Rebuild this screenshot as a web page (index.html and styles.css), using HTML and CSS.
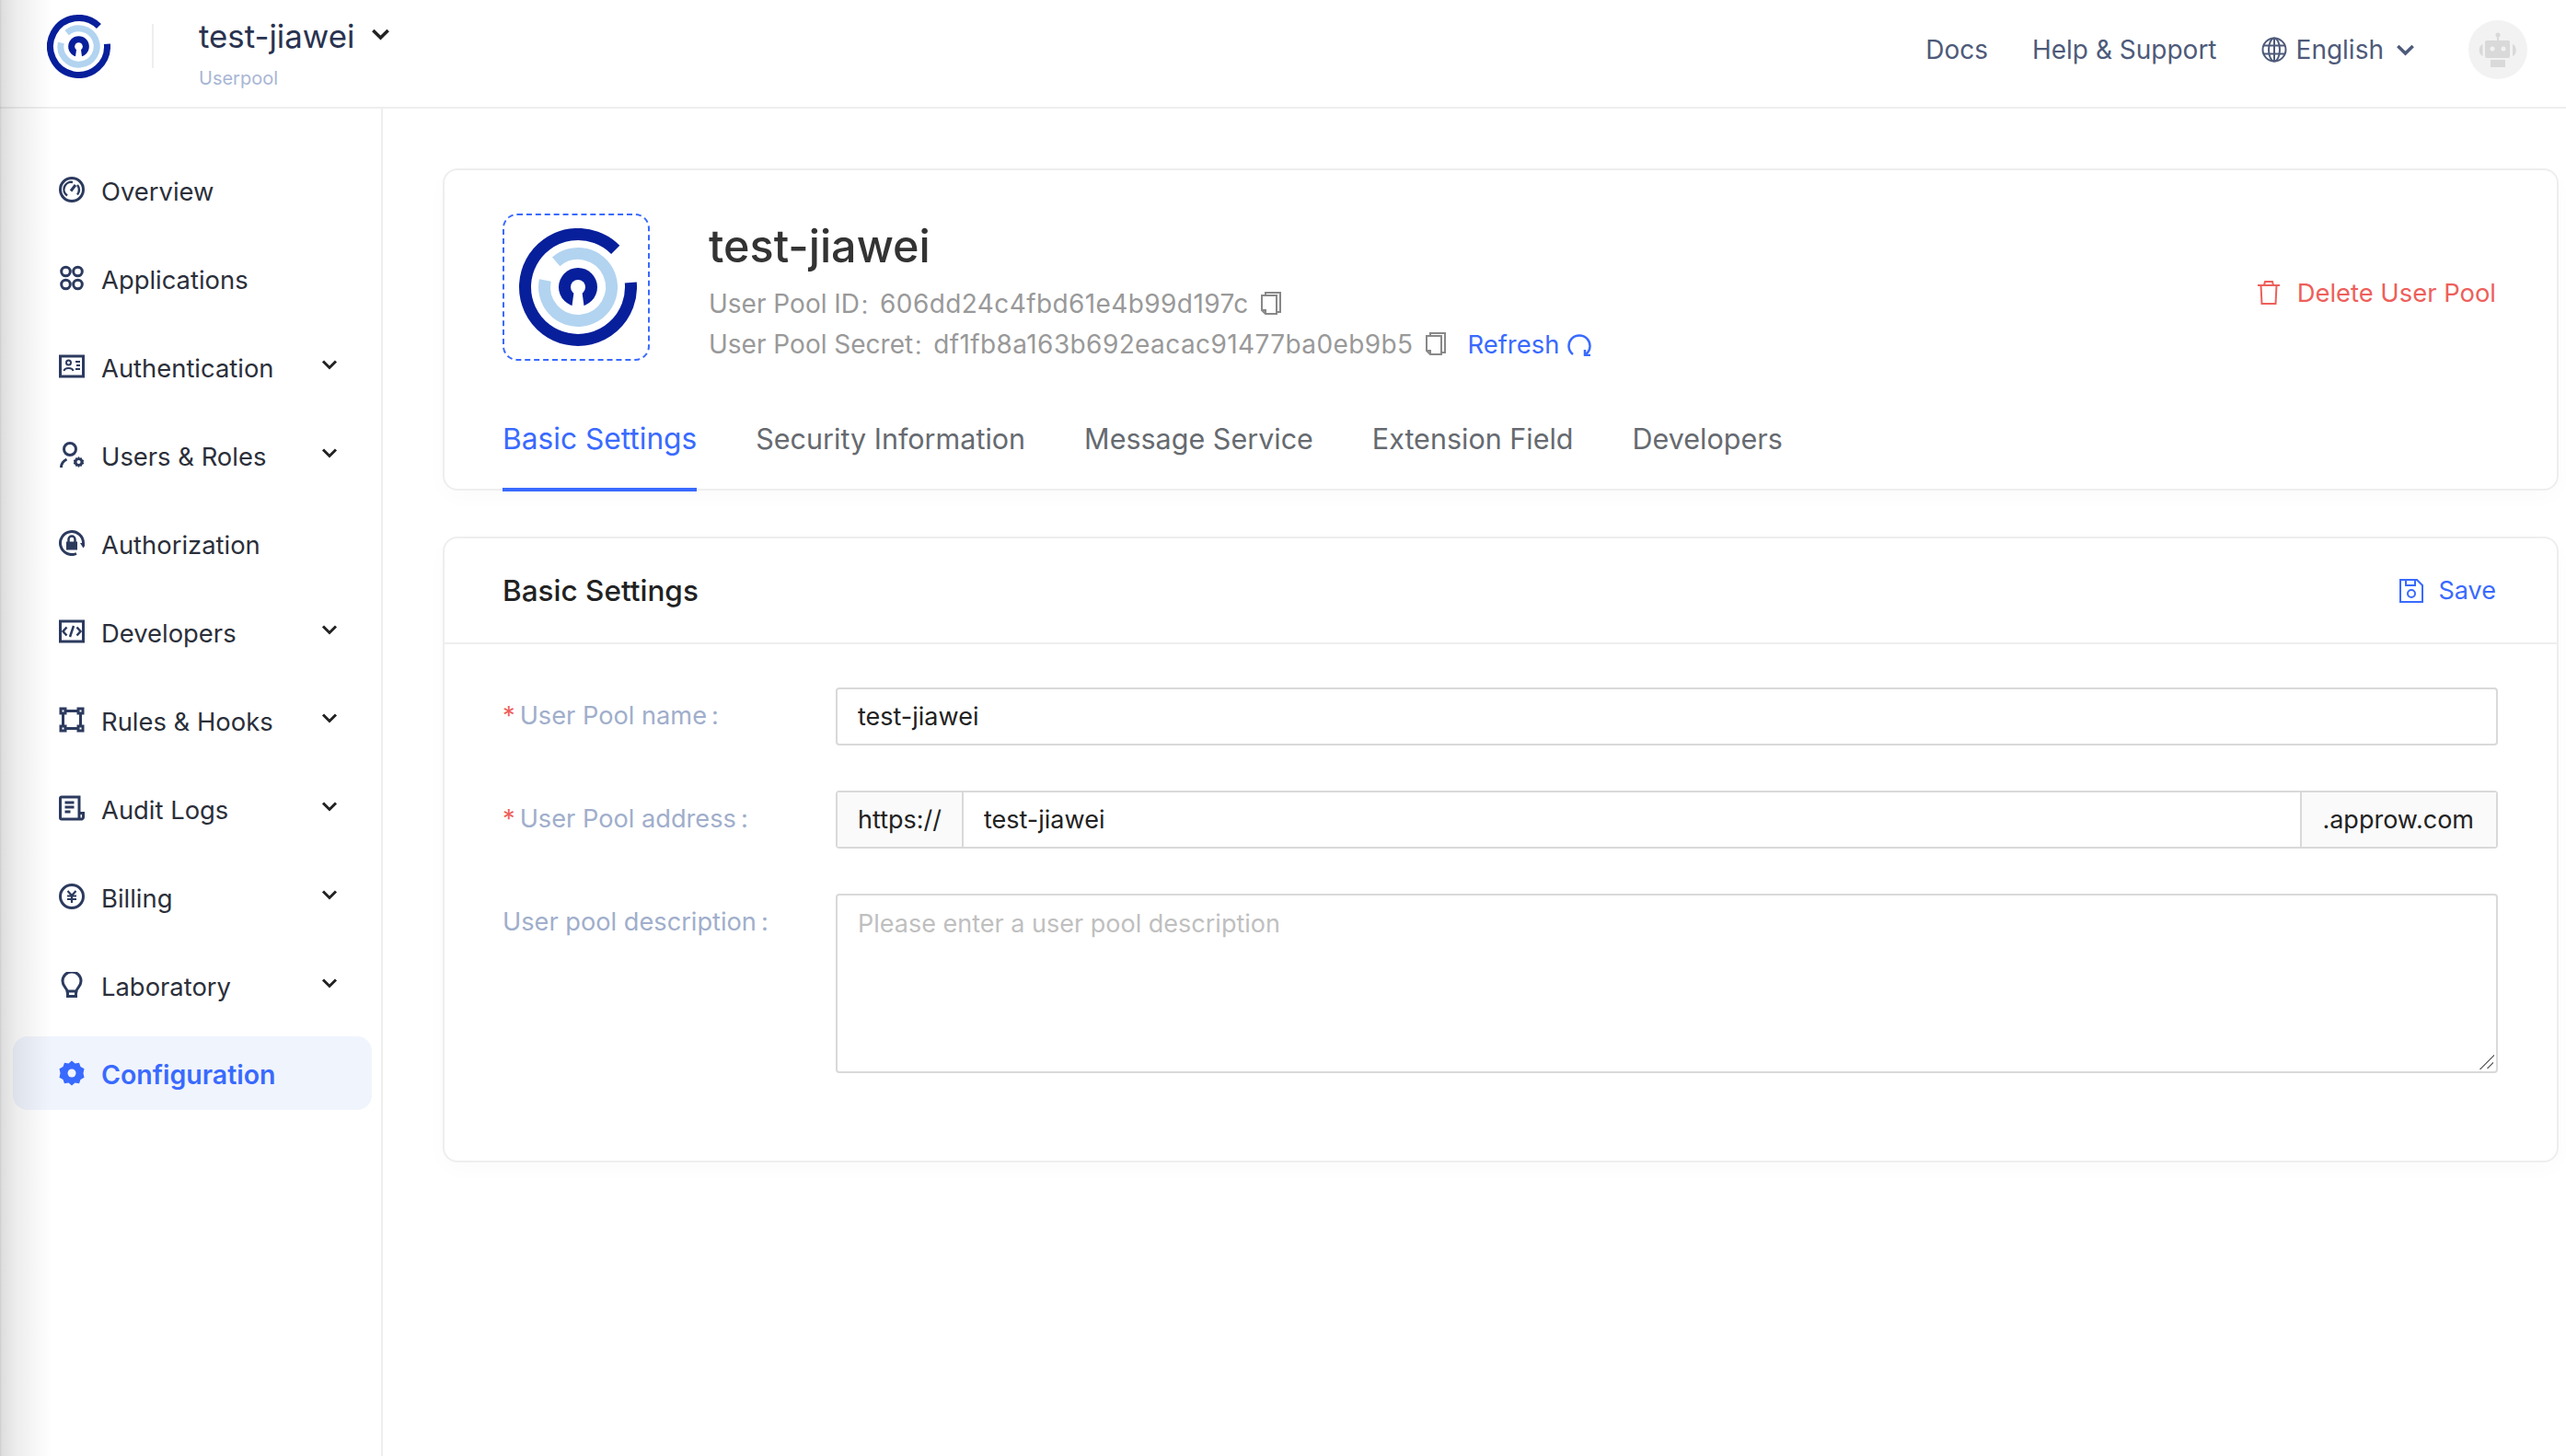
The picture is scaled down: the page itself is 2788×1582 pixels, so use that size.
FILE: index.html
```html
<!DOCTYPE html>
<html lang="en">
<head>
    <meta charset="UTF-8">
    <meta name="viewport" content="width=device-width, initial-scale=1.0">
    <title>Basic Settings</title>
    <link rel="stylesheet" href="styles.css">
</head>
<body>
    <svg class="defs" width="0" height="0">
        <symbol id="logo" viewBox="0 0 128 128">
            <path d="M104.7 23.3A57.5 57.5 0 1 0 121.3 59" fill="none" stroke="#071f9b" stroke-width="13"/>
            <path d="M40.2 36.3A36.5 36.5 0 1 1 28.3 56.5" fill="none" stroke="#b2d4f0" stroke-width="13"/>
            <circle cx="64" cy="64" r="21" fill="#071f9b"/>
            <circle cx="64" cy="64" r="8" fill="#fff"/>
            <path d="M60 66h8l3 22H57z" fill="#fff"/>
        </symbol>
        <symbol id="chev" viewBox="0 0 18 12">
            <path d="M2 2.5l7 7 7-7" fill="none" stroke="currentColor" stroke-width="3"/>
        </symbol>
        <symbol id="copy" viewBox="0 0 24 26">
            <path d="M5 4h13v20H6l-4-4V4zM2 20h4v4M6 4V1h16v21h-4" fill="none" stroke="currentColor" stroke-width="2"/>
        </symbol>
    </svg>

    <div class="edge-shade"></div>

    <header class="topbar">
        <div class="brand">
            <svg class="brand-logo"><use href="#logo"/></svg>
            <span class="brand-sep"></span>
            <div class="pool-switch">
                <div class="pool-name">test-jiawei <svg class="pool-chev"><use href="#chev"/></svg></div>
                <div class="pool-type">Userpool</div>
            </div>
        </div>
        <nav class="top-links">
            <a>Docs</a>
            <a>Help &amp; Support</a>
            <a class="lang">
                <svg class="globe" viewBox="0 0 28 28" fill="none" stroke="currentColor" stroke-width="2">
                    <circle cx="14" cy="14" r="12.5"/>
                    <ellipse cx="14" cy="14" rx="6" ry="12.5"/>
                    <path d="M14 1.5v25M2.5 9.5h23M2.5 18.500h23"/>
                </svg>
                English
                <svg class="lang-chev"><use href="#chev"/></svg>
            </a>
            <div class="avatar">
                <svg viewBox="0 0 64 64" width="64" height="64" fill="#d9d9d9">
                    <circle cx="32" cy="16" r="2.500"/>
                    <rect x="31" y="17" width="2" height="5"/>
                    <rect x="18" y="22" width="27" height="19" rx="2"/>
                    <path d="M15.500 26v13c-5-2-5-11 0-13zM48 26v13c5-2 5-11 0-13z"/>
                    <rect x="24" y="43" width="16" height="8"/>
                    <circle cx="26" cy="31" r="2.500" fill="#f2f2f2"/>
                    <circle cx="38" cy="31" r="2.500" fill="#f2f2f2"/>
                </svg>
            </div>
        </nav>
    </header>

    <div class="layout">
        <aside class="sidebar">
            <a class="side-item">
                <svg class="side-icon" viewBox="0 0 28 28">
                    <circle cx="14" cy="14" r="12.500"/>
                    <path d="M9 20.500a8 8 0 0 1 6-14.500M20 9a8 8 0 0 1 0 10.500" stroke-width="2.500"/>
                    <path d="M13 15.500l5-6.500"/>
                </svg>
                <span class="side-label">Overview</span>
            </a>
            <a class="side-item">
                <svg class="side-icon" viewBox="0 0 28 28">
                    <circle cx="7.500" cy="7" r="4.800"/>
                    <circle cx="20.500" cy="7" r="4.800"/>
                    <circle cx="7.500" cy="21" r="4.800"/>
                    <circle cx="20.500" cy="21" r="4.800"/>
                </svg>
                <span class="side-label">Applications</span>
            </a>
            <a class="side-item">
                <svg class="side-icon" viewBox="0 0 28 28">
                    <path d="M1.500 3h25v22h-25z"/>
                    <circle cx="10.500" cy="10" r="2.500" stroke-width="2"/>
                    <path d="M5.500 19c1-4 9-4 10 0M18 9h5M19 13h4M18 17h5" stroke-width="2"/>
                </svg>
                <span class="side-label">Authentication</span>
                <svg class="side-chev"><use href="#chev"/></svg>
            </a>
            <a class="side-item">
                <svg class="side-icon" viewBox="0 0 28 28">
                    <circle cx="12" cy="8" r="6.500"/>
                    <path d="M2.500 28c0-4 2-7 6-9"/>
                    <path class="solid" d="M21.500 16l1.200 1.600 2-.4.700 2 1.800.8-.6 2 .6 2-1.800.8-.7 2-2-.4-1.200 1.600-1.200-1.600-2 .4-.7-2-1.800-.8.600-2-.6-2 1.800-.8.700-2 2 .4z"/>
                    <circle cx="21.500" cy="22" r="2" fill="#fff" stroke="none"/>
                </svg>
                <span class="side-label">Users &amp; Roles</span>
                <svg class="side-chev"><use href="#chev"/></svg>
            </a>
            <a class="side-item">
                <svg class="side-icon" viewBox="0 0 28 28">
                    <path d="M19 25.500A12.500 12.500 0 1 1 26.500 14"/>
                    <path class="solid" d="M23 14h7l-3.500 5.500zM8 12.500h12v9H8z"/>
                    <path d="M10.500 13v-3a3.500 3.500 0 0 1 7 0v3" stroke-width="2.500"/>
                </svg>
                <span class="side-label">Authorization</span>
            </a>
            <a class="side-item">
                <svg class="side-icon" viewBox="0 0 28 28">
                    <path d="M1.500 3h25v22h-25z"/>
                    <path d="M8.500 9.500L4.500 14l4 4.500M19.500 9.500l4 4.500-4 4.500M16 8l-4 12" stroke-width="2.500"/>
                </svg>
                <span class="side-label">Developers</span>
                <svg class="side-chev"><use href="#chev"/></svg>
            </a>
            <a class="side-item">
                <svg class="side-icon" viewBox="0 0 28 28">
                    <rect x="2" y="2" width="5" height="5"/>
                    <rect x="21" y="2" width="5" height="5"/>
                    <rect x="2" y="21" width="5" height="5"/>
                    <rect x="21" y="21" width="5" height="5"/>
                    <path d="M7 4.500h14M7 23.500h14M4.500 7v14M23.500 7v14"/>
                </svg>
                <span class="side-label">Rules &amp; Hooks</span>
                <svg class="side-chev"><use href="#chev"/></svg>
            </a>
            <a class="side-item">
                <svg class="side-icon" viewBox="0 0 28 28">
                    <path d="M22 20V2H3a1.500 1.500 0 0 0-1.500 1.500v21a1.500 1.500 0 0 0 1.500 1.500h22a2 2 0 0 0 1.500-2v-4.500H22v6"/>
                    <path d="M6.500 8h10M6.500 13h10M6.500 18h6"/>
                </svg>
                <span class="side-label">Audit Logs</span>
                <svg class="side-chev"><use href="#chev"/></svg>
            </a>
            <a class="side-item">
                <svg class="side-icon" viewBox="0 0 28 28">
                    <circle cx="14" cy="14" r="12.500"/>
                    <path d="M9.500 8l4.500 5 4.500-5M9 13.500h10M9 17h10M14 13v8" stroke-width="2.200"/>
                </svg>
                <span class="side-label">Billing</span>
                <svg class="side-chev"><use href="#chev"/></svg>
            </a>
            <a class="side-item">
                <svg class="side-icon" viewBox="0 0 28 28">
                    <path d="M9 21c0-3-5-5-5-11a10 10 0 0 1 20 0c0 6-5 8-5 11zM9.500 21v5.500h9V21"/>
                </svg>
                <span class="side-label">Laboratory</span>
                <svg class="side-chev"><use href="#chev"/></svg>
            </a>
            <a class="side-item active">
                <svg class="side-icon gear" viewBox="0 0 28 28">
                    <path d="M14 0.500l3.500 3 4.500-.7 1.500 4.200 4 2.300-1 4.700 1 4.700-4 2.300-1.500 4.200-4.500-.7-3.500 3-3.500-3-4.500.7-1.500-4.200-4-2.300 1-4.700-1-4.700 4-2.300 1.500-4.200 4.500.7z"/>
                    <circle cx="14" cy="14" r="4.500" fill="#f0f4fd"/>
                </svg>
                <span class="side-label">Configuration</span>
            </a>
        </aside>

        <main class="content">
            <section class="card pool-card">
                <div class="pool-head">
                    <div class="logo-box">
                        <svg class="pool-logo"><use href="#logo"/></svg>
                    </div>
                    <div class="pool-info">
                        <h1 class="pool-title">test-jiawei</h1>
                        <div class="pool-meta">User Pool ID<span class="colon">：</span><span class="meta-val">606dd24c4fbd61e4b99d197c</span><svg class="copy-icon"><use href="#copy"/></svg></div>
                        <div class="pool-meta">User Pool Secret<span class="colon">：</span><span class="meta-val">df1fb8a163b692eacac91477ba0eb9b5</span><svg class="copy-icon"><use href="#copy"/></svg>
                            <a class="refresh">Refresh
                                <svg viewBox="0 0 26 26" width="26" height="26" fill="none" stroke="currentColor" stroke-width="2.500">
                                    <path d="M6 24A11.500 11.500 0 1 1 20 24"/>
                                    <path d="M19 19v6h6"/>
                                </svg>
                            </a>
                        </div>
                    </div>
                    <a class="delete-btn">
                        <svg viewBox="0 0 24 26" width="24" height="26" fill="none" stroke="currentColor" stroke-width="2">
                            <path d="M0 5h24M3.500 5l1 20h15l1-20M7 5l1-4h8l1 4"/>
                        </svg>
                        Delete User Pool
                    </a>
                </div>
                <nav class="tabs">
                    <a class="tab active">Basic Settings</a>
                    <a class="tab">Security Information</a>
                    <a class="tab">Message Service</a>
                    <a class="tab">Extension Field</a>
                    <a class="tab">Developers</a>
                </nav>
            </section>

            <section class="card form-card">
                <div class="form-head">
                    <h2 class="form-title">Basic Settings</h2>
                    <a class="save-btn">
                        <svg viewBox="0 0 26 26" width="26" height="26" fill="none" stroke="currentColor" stroke-width="2">
                            <path d="M1 1h18l6 6v18H1z"/>
                            <path d="M7 1v6h10V1"/>
                            <circle cx="13" cy="16" r="4"/>
                        </svg>
                        Save
                    </a>
                </div>
                <form class="form-body">
                    <div class="form-row">
                        <label class="form-label"><span class="req">*</span>User Pool name<span class="label-colon">:</span></label>
                        <input class="text-input" type="text" value="test-jiawei">
                    </div>
                    <div class="form-row">
                        <label class="form-label"><span class="req">*</span>User Pool address<span class="label-colon">:</span></label>
                        <div class="input-group">
                            <span class="addon addon-left">https://</span>
                            <input class="group-input" type="text" value="test-jiawei">
                            <span class="addon addon-right">.approw.com</span>
                        </div>
                    </div>
                    <div class="form-row">
                        <label class="form-label">User pool description<span class="label-colon">:</span></label>
                        <textarea class="text-area" placeholder="Please enter a user pool description"></textarea>
                    </div>
                </form>
            </section>
        </main>
    </div>
</body>
</html>
```

FILE: styles.css
```css
* {
    box-sizing: border-box;
}

html, body {
    height: 100%;
}

body {
    margin: 0;
    background-color: #fff;
    font-family: Inter, 'Noto Sans', sans-serif;
    font-size: 27.4px;
    color: #333;
    overflow: hidden;
}

.defs {
    position: absolute;
}

/* window shadow falling on the left edge */
.edge-shade {
    position: absolute;
    left: 0;
    top: 0;
    bottom: 0;
    width: 56px;
    background: linear-gradient(90deg, rgba(40, 40, 60, 0.24) 0, rgba(0, 0, 0, 0.13) 2px, rgba(0, 0, 0, 0.07) 18px, rgba(0, 0, 0, 0) 56px);
    pointer-events: none;
    z-index: 5;
}

.topbar {
    display: flex;
    align-items: center;
    justify-content: space-between;
    height: 118px;
    padding: 0 42px 8px 51px;
    border-bottom: 2px solid #eeeeee;
}

.brand {
    display: flex;
    align-items: center;
    margin-top: -8px;
}

.brand-logo {
    width: 69px;
    height: 69px;
}

.brand-sep {
    width: 2px;
    height: 48px;
    margin: 0 49px 0 45px;
    background-color: #eeeeee;
}

.pool-switch {
    margin-top: 16px;
}

.pool-name {
    display: flex;
    align-items: center;
    font-size: 34.800px;
    line-height: 44px;
    color: #293350;
}

.pool-chev {
    width: 21px;
    height: 14px;
    margin: -4px 0 0 18px;
    color: #222;
}

.pool-type {
    margin-top: 10px;
    font-size: 20px;
    line-height: 28px;
    color: #a8b6d4;
}

.top-links {
    display: flex;
    align-items: center;
    font-size: 28px;
    color: #4e5a7a;
}

.top-links a {
    margin-right: 48px;
}

.lang {
    display: flex;
    align-items: center;
}

.globe {
    width: 28px;
    height: 28px;
    margin-right: 10px;
}

.lang-chev {
    width: 21px;
    height: 14px;
    margin-left: 13px;
}

.top-links a.lang {
    margin-right: 58px;
}

.avatar {
    width: 64px;
    height: 64px;
    border-radius: 50%;
    background-color: #f2f2f2;
}

.layout {
    display: flex;
    height: calc(100% - 118px);
}

.sidebar {
    display: flex;
    flex-direction: column;
    gap: 16px;
    width: 416px;
    flex-shrink: 0;
    padding: 48px 10px 0 14px;
    border-right: 2px solid #eeeeee;
}

.side-item {
    display: flex;
    align-items: center;
    height: 80px;
    padding-left: 50px;
    border-radius: 16px;
    color: #2b2f3a;
}

.side-icon {
    width: 28px;
    height: 28px;
    margin-right: 18px;
    fill: none;
    stroke: #2c3a5e;
    stroke-width: 3;
}

.side-icon .solid {
    fill: #2c3a5e;
    stroke: none;
}

.side-label {
    flex: 1;
    padding-top: 4px;
}

.side-chev {
    width: 18px;
    height: 12px;
    margin: -4px 37px 0 0;
    color: #222;
}

.side-item.active {
    background-color: #f0f4fd;
    color: #396aff;
    font-size: 28.500px;
    font-weight: 600;
}

.side-item.active .side-label {
    padding-top: 3px;
}

.side-item.active .gear {
    fill: #396aff;
    stroke: none;
}

.content {
    flex: 1;
    min-width: 0;
    padding: 65px 8px 0 65px;
}

.card {
    border: 2px solid #eeeeee;
    border-radius: 16px;
    background-color: #fff;
    box-shadow: 0 8px 24px rgba(0, 0, 0, 0.02);
}

.pool-card {
    height: 350px;
    padding: 47px 0 0 63px;
}

.pool-head {
    display: flex;
    align-items: flex-start;
    height: 160px;
    padding-right: 66px;
}

.logo-box {
    display: flex;
    align-items: center;
    justify-content: center;
    width: 160px;
    height: 160px;
    padding-left: 4px;
    border: 2px dashed #396aff;
    border-radius: 16px;
    flex-shrink: 0;
}

.pool-logo {
    width: 128px;
    height: 128px;
}

.pool-info {
    flex: 1;
    margin-left: 64px;
}

.pool-title {
    margin: 6px 0 0;
    font-size: 48.500px;
    line-height: 60px;
    font-weight: 500;
    color: #333;
}

.pool-meta {
    display: flex;
    align-items: center;
    height: 44px;
    font-size: 28px;
    color: #999;
}

.pool-title + .pool-meta {
    margin-top: 10px;
}

.colon {
    font-size: 22px;
    font-family: 'Noto Sans CJK SC', sans-serif;
}

.meta-val {
    letter-spacing: 0.4px;
}

.copy-icon {
    width: 24px;
    height: 26px;
    margin-left: 12px;
    color: #888;
}

.refresh {
    display: flex;
    align-items: center;
    gap: 9px;
    margin-left: 23px;
    font-size: 27.4px;
    color: #396aff;
}

.delete-btn {
    display: flex;
    align-items: center;
    gap: 19px;
    margin-top: 69px;
    color: #ee5f5b;
}

.tabs {
    display: flex;
    gap: 64px;
    margin-top: 34px;
}

.tab {
    height: 108px;
    padding-top: 29px;
    font-size: 30.500px;
    line-height: 44px;
    color: #666a70;
}

.tab.active {
    border-bottom: 4px solid #396aff;
    font-size: 31.700px;
    color: #396aff;
}

.form-card {
    height: 680px;
    margin-top: 50px;
}

.form-head {
    display: flex;
    align-items: center;
    justify-content: space-between;
    height: 115px;
    padding: 0 66px 0 63px;
    border-bottom: 2px solid #eeeeee;
}

.form-title {
    margin: 0;
    font-size: 31.500px;
    font-weight: 500;
    color: #222;
}

.save-btn {
    display: flex;
    align-items: center;
    gap: 17px;
    font-size: 27px;
    color: #396aff;
}

.form-body {
    display: flex;
    flex-direction: column;
    gap: 49px;
    padding: 47px 64px 0 63px;
}

.form-row {
    display: flex;
    align-items: flex-start;
}

.form-label {
    width: 362px;
    flex-shrink: 0;
    font-size: 27.200px;
    line-height: 62px;
    color: #a0aecb;
}

.req {
    margin-right: 5px;
    color: #ee5f5b;
}

.label-colon {
    margin-left: 5px;
}

.text-input, .group-input, .text-area {
    font-family: inherit;
    font-size: 27px;
    color: #222;
    outline: none;
}

.text-input {
    flex: 1;
    height: 63px;
    padding: 0 22px;
    border: 2px solid #d9d9d9;
    border-radius: 4px;
}

.input-group {
    display: flex;
    flex: 1;
    height: 63px;
    border: 2px solid #d9d9d9;
    border-radius: 4px;
}

.addon {
    display: flex;
    align-items: center;
    padding: 0 22px;
    font-size: 27px;
    background-color: #fafafa;
    color: #222;
}

.addon-left {
    border-right: 2px solid #d9d9d9;
}

.addon-right {
    padding-right: 24px;
    border-left: 2px solid #d9d9d9;
}

.group-input {
    flex: 1;
    min-width: 0;
    padding: 0 22px;
    border: none;
}

.text-area {
    flex: 1;
    display: block;
    height: 195px;
    padding: 11px 22px;
    border: 2px solid #d9d9d9;
    border-radius: 4px;
    line-height: 40px;
    resize: none;
    /* resize grip, two diagonal strokes in the corner */
    background-image: linear-gradient(135deg, transparent 47%, #777 47%, #777 55%, transparent 55%), linear-gradient(135deg, transparent 46%, #777 46%, #777 58%, transparent 58%);
    background-size: 16px 16px, 7px 7px;
    background-position: right 2px bottom 2px, right 3px bottom 3px;
    background-repeat: no-repeat;
}

.text-area::placeholder {
    color: #bfbfbf;
}
```
